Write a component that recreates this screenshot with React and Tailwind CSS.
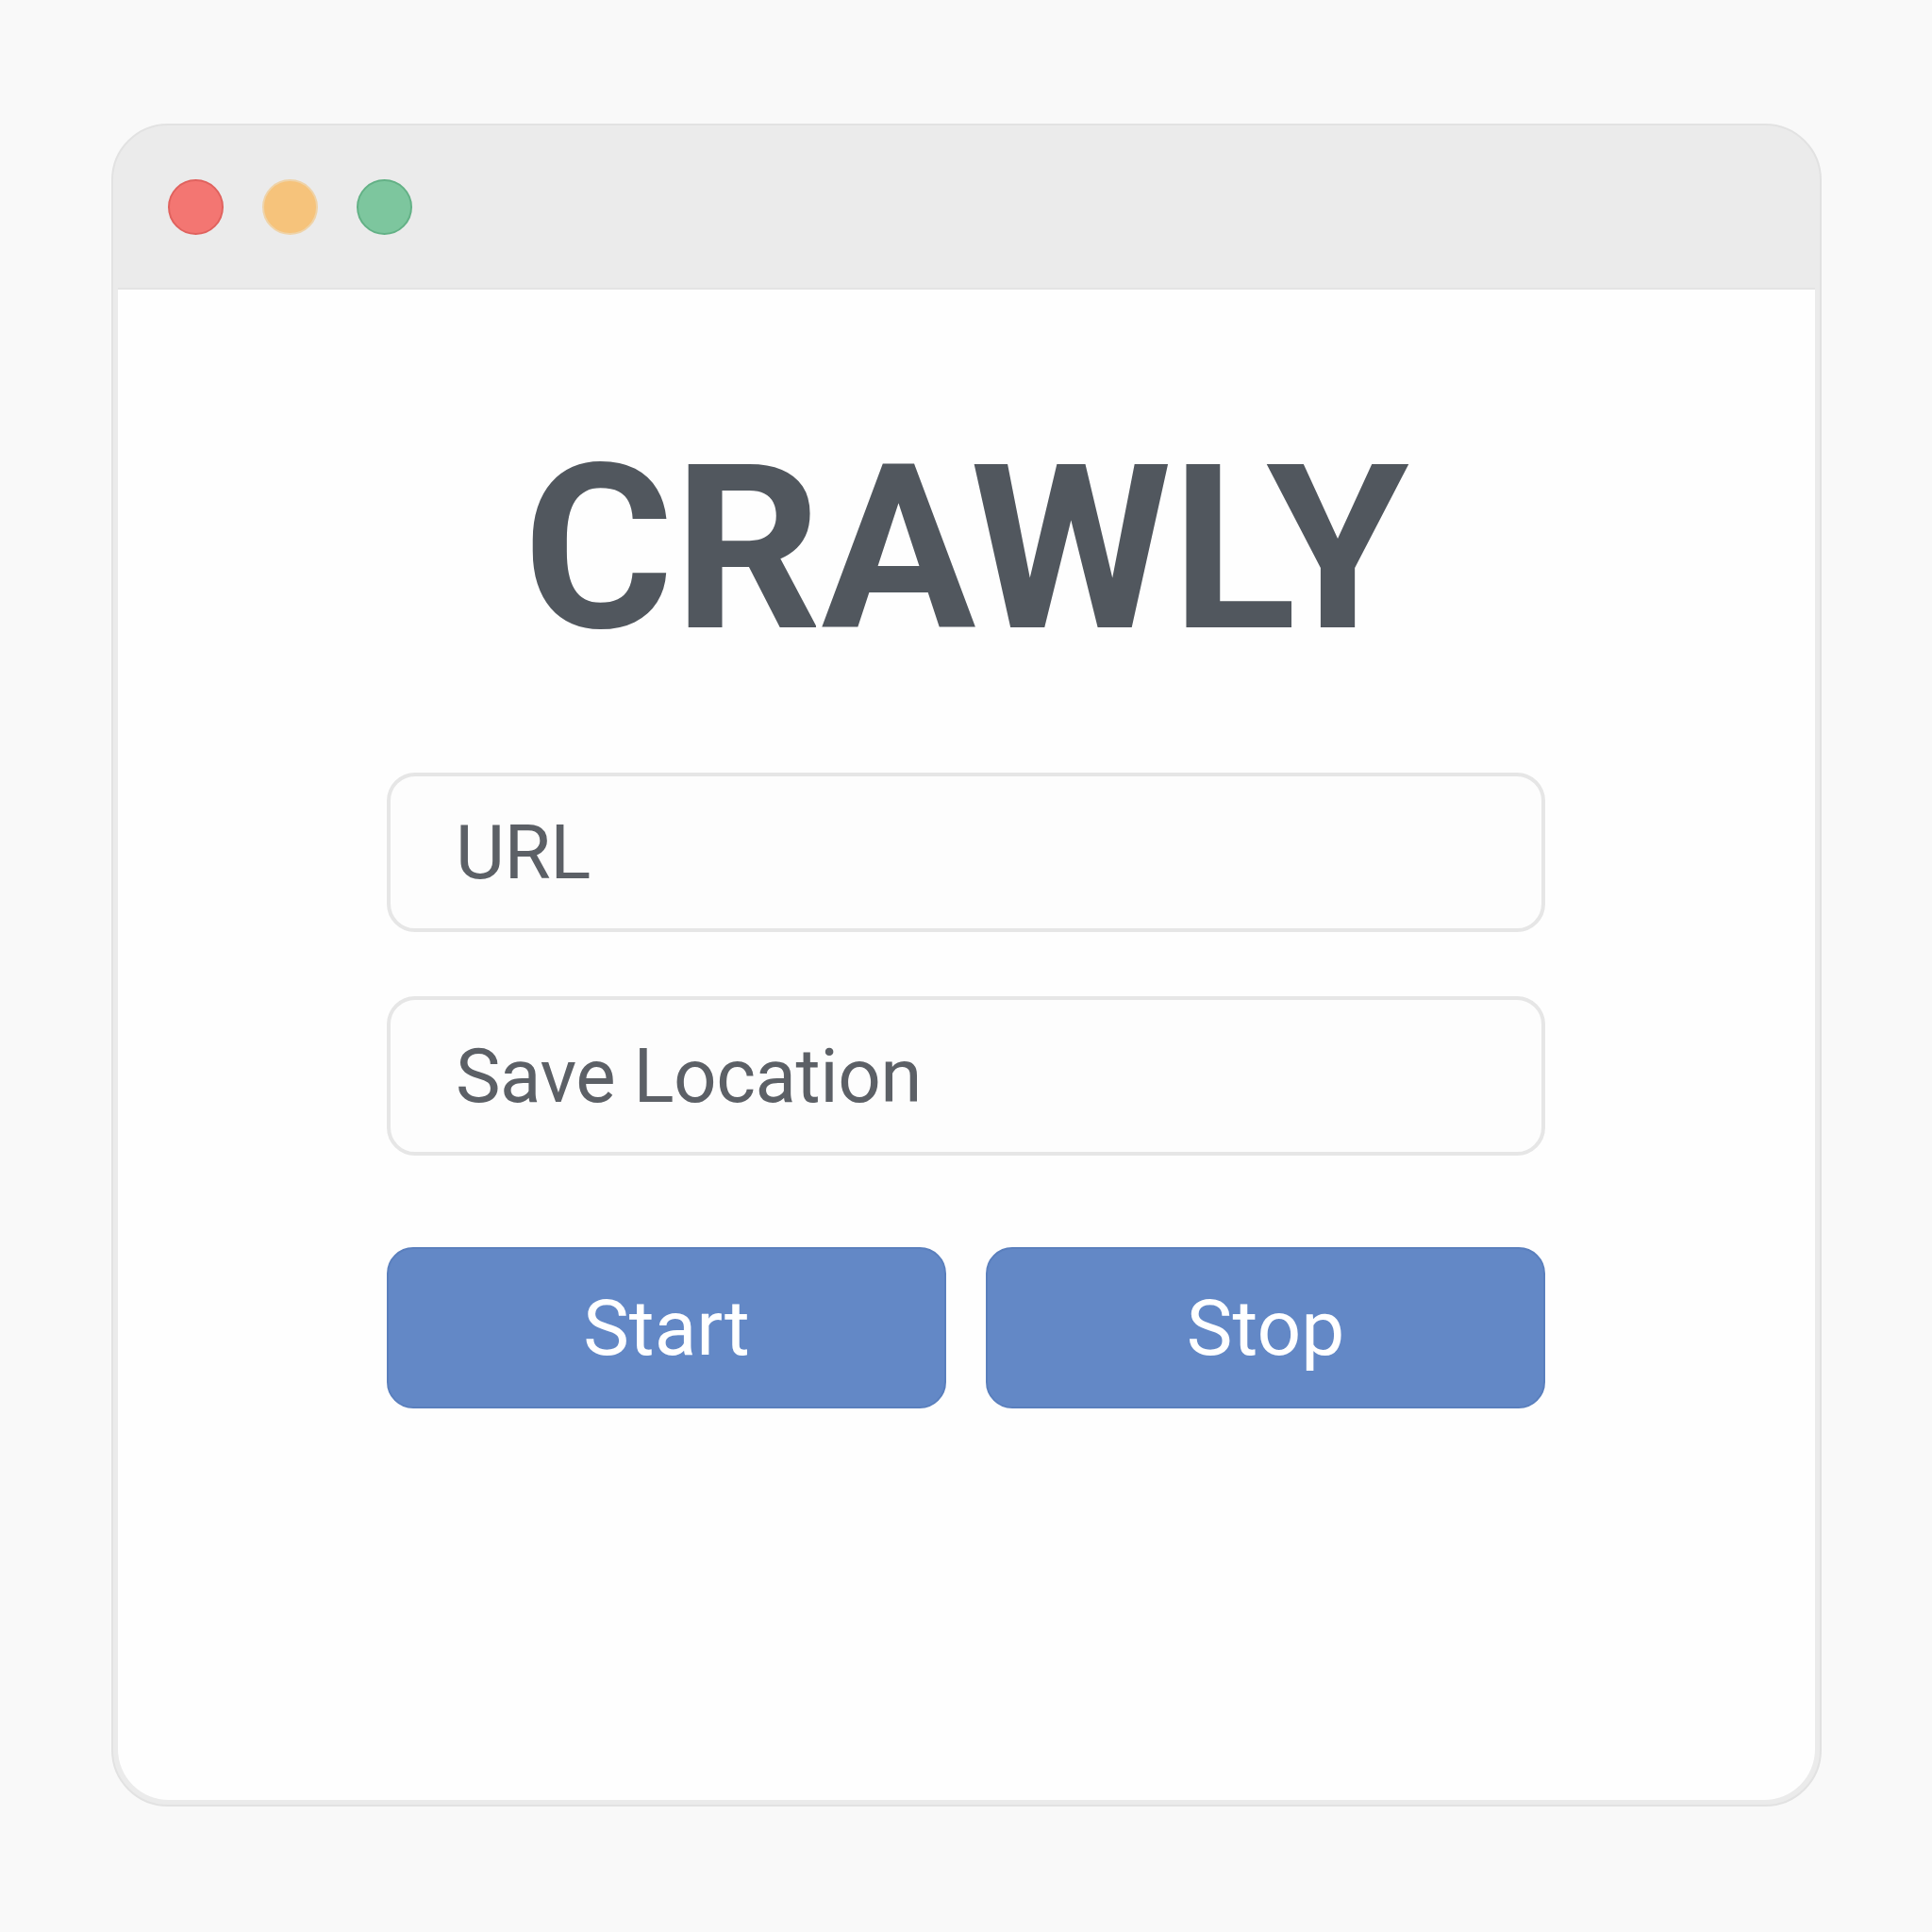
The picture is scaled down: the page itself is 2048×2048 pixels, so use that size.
import React from 'react';

const Dot = ({ color, ring }) => (
  <span className={`block w-[59px] h-[59px] rounded-full border-2 ${color} ${ring}`} />
);

const Field = ({ label }) => (
  <div className="h-[169px] rounded-[30px] border-[4px] border-[#e6e6e6] bg-[#fdfdfd] flex items-center px-[69px]">
    <span className="text-[80px] leading-none text-[#5c6066] tracking-[-0.5px]">{label}</span>
  </div>
);

const Button = ({ label }) => (
  <button className="flex-1 h-[171px] rounded-[28px] bg-[#6388c6] border-2 border-[#5a7fbd] flex items-center justify-center text-[82px] leading-none text-white">
    {label}
  </button>
);

export default function App() {
  return (
    <div className="min-h-screen bg-[#f9f9f9] pt-[131px] pb-[133px]" style={{ fontFamily: 'Roboto, "Liberation Sans", sans-serif' }}>
      <div className="mx-auto w-[1813px] h-[1784px] rounded-[60px] bg-[#ebebeb] border-2 border-[#e2e2e2] flex flex-col overflow-hidden">
        <div className="h-[172px] flex items-center gap-[41px] pl-[58px] shrink-0">
          <Dot color="bg-[#f37672]" ring="border-[#e0625e]" />
          <Dot color="bg-[#f6c37b]" ring="border-[#efd3a8]" />
          <Dot color="bg-[#7dc69e]" ring="border-[#63b186]" />
        </div>
        <div className="flex-1 mx-[5px] mb-[5px] bg-[#fefefe] rounded-b-[54px] border-t-2 border-[#e4e4e4] flex flex-col items-center">
          <h1 className="mt-[153px] text-[244px] leading-none font-bold text-[#51575e]">CRAWLY</h1>
          <div className="mt-[115px] w-[1228px] flex flex-col gap-[68px]">
            <Field label="URL" />
            <Field label="Save Location" />
            <div className="mt-[29px] flex gap-[42px]">
              <Button label="Start" />
              <Button label="Stop" />
            </div>
          </div>
        </div>
      </div>
    </div>
  );
}
